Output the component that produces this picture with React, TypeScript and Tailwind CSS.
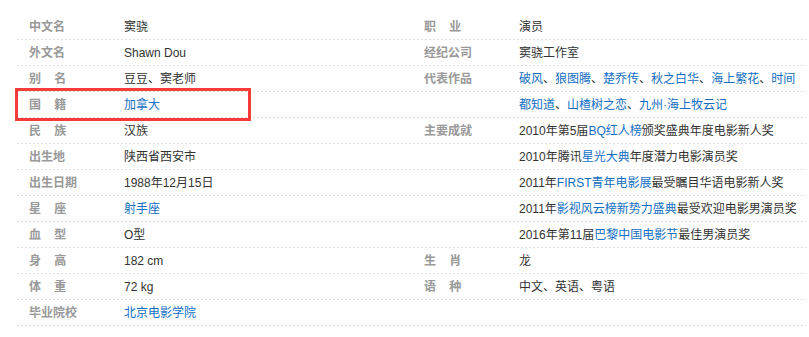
import React from "react";

type Seg = { t: string; link?: boolean };
type Row = { label?: string; value: Seg[] };

const L = (t: string): Seg => ({ t, link: true });
const P = (t: string): Seg => ({ t });

const sp = "\u00a0\u00a0\u00a0\u00a0";

const left: Row[] = [
  { label: "中文名", value: [P("窦骁")] },
  { label: "外文名", value: [P("Shawn Dou")] },
  { label: `别${sp}名`, value: [P("豆豆、窦老师")] },
  { label: `国${sp}籍`, value: [L("加拿大")] },
  { label: `民${sp}族`, value: [P("汉族")] },
  { label: "出生地", value: [P("陕西省西安市")] },
  { label: "出生日期", value: [P("1988年12月15日")] },
  { label: `星${sp}座`, value: [L("射手座")] },
  { label: `血${sp}型`, value: [P("O型")] },
  { label: `身${sp}高`, value: [P("182 cm")] },
  { label: `体${sp}重`, value: [P("72 kg")] },
  { label: "毕业院校", value: [L("北京电影学院")] },
];

const right: Row[] = [
  { label: `职${sp}业`, value: [P("演员")] },
  { label: "经纪公司", value: [P("窦骁工作室")] },
  {
    label: "代表作品",
    value: [L("破风"), P("、"), L("狼图腾"), P("、"), L("楚乔传"), P("、"), L("秋之白华"), P("、"), L("海上繁花"), P("、"), L("时间")],
  },
  { value: [L("都知道"), P("、"), L("山楂树之恋"), P("、"), L("九州·海上牧云记")] },
  { label: "主要成就", value: [P("2010年第5届"), L("BQ红人榜"), P("颁奖盛典年度电影新人奖")] },
  { value: [P("2010年腾讯"), L("星光大典"), P("年度潜力电影演员奖")] },
  { value: [P("2011年"), L("FIRST青年电影展"), P("最受瞩目华语电影新人奖")] },
  { value: [P("2011年"), L("影视风云榜新势力盛典"), P("最受欢迎电影男演员奖")] },
  { value: [P("2016年第11届"), L("巴黎中国电影节"), P("最佳男演员奖")] },
  { label: `生${sp}肖`, value: [P("龙")] },
  { label: `语${sp}种`, value: [P("中文、英语、粤语")] },
  { value: [] },
];

function Item({ row, pad }: { row: Row; pad: string }) {
  return (
    <div className="flex flex-col">
      <div className={`flex h-[25px] items-center ${pad}`}>
        <div className="w-[95px] shrink-0 whitespace-pre font-bold text-[#999]">{row.label ?? ""}</div>
        <div className="whitespace-nowrap text-[#333]">
          {row.value.map((s, i) =>
            s.link ? (
              <span key={i} className="text-[#136ec2]">
                {s.t}
              </span>
            ) : (
              <span key={i}>{s.t}</span>
            )
          )}
        </div>
      </div>
      <div className="h-px bg-[linear-gradient(to_right,#dcdcdc_50%,transparent_50%)] bg-[length:4px_1px] bg-repeat-x" />
    </div>
  );
}

export default function App() {
  return (
    <div
      className="relative h-[337px] w-[809px] bg-white pl-[17px] pt-[14px] text-[12px] leading-[14px]"
      style={{ fontFamily: '"Liberation Sans", Arial, "Noto Sans CJK SC", sans-serif' }}
    >
      <div className="grid w-[789px] grid-cols-[388px_401px]">
        <div className="flex flex-col">
          {left.map((r, i) => (
            <Item key={i} row={r} pad="pl-[12px]" />
          ))}
        </div>
        <div className="flex flex-col">
          {right.map((r, i) => (
            <Item key={i} row={r} pad="pl-[19px]" />
          ))}
        </div>
      </div>
      <div className="pointer-events-none absolute left-[15px] top-[88px] h-[33px] w-[236px] border-[3px] border-[#f63b3b]" />
    </div>
  );
}
